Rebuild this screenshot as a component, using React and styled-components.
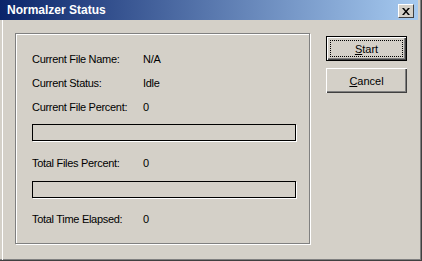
import React from "react";
import styled, { createGlobalStyle } from "styled-components";

const GlobalStyle = createGlobalStyle`
  html, body {
    margin: 0;
    padding: 0;
    background: #ffffff;
  }
`;

const Window = styled.div`
  width: 422px;
  height: 261px;
  box-sizing: border-box;
  background: #d4d0c8;
  border-right: 1px solid #404040;
  border-bottom: 1px solid #404040;
  box-shadow: inset -1px -1px 0 #808080;
  font-family: "Liberation Sans", Arial, sans-serif;
  display: flex;
  flex-direction: column;
  overflow: hidden;
`;

const TitleBar = styled.div`
  height: 20px;
  margin-right: 3px;
  display: flex;
  align-items: center;
  justify-content: space-between;
  padding: 0 4px 0 7px;
  background: linear-gradient(to right, #0a246a, #a6caf0);
`;

const Title = styled.span`
  color: #ffffff;
  font-weight: bold;
  font-size: 12px;
  letter-spacing: 0px;
`;

const CloseButton = styled.div`
  width: 16px;
  height: 14px;
  box-sizing: border-box;
  margin-top: 2px;
  background: #d4d0c8;
  border-top: 1px solid #ffffff;
  border-left: 1px solid #ffffff;
  border-right: 1px solid #404040;
  border-bottom: 1px solid #404040;
  display: flex;
  align-items: center;
  justify-content: center;
`;

const Body = styled.div`
  flex: 1;
  display: flex;
  align-items: flex-start;
  border-left: 1px solid #ffffff;
  margin-left: 2px;
  padding: 13px 0 0 12px;
`;

const GroupBox = styled.div`
  width: 295px;
  height: 211px;
  box-sizing: border-box;
  border: 1px solid #808080;
  box-shadow: inset 1px 1px 0 #ffffff, 1px 1px 0 #ffffff;
  padding: 13px 0 0 16px;
  display: flex;
  flex-direction: column;
`;

const Field = styled.div`
  display: flex;
  align-items: center;
  height: 24px;
  margin-top: ${(p) => p.$gap || 0}px;
  font-size: 11px;
  letter-spacing: -0.3px;
  color: #000000;
`;

const Label = styled.span`
  width: 111px;
`;

const Bar = styled.div`
  width: 264px;
  height: 17px;
  box-sizing: border-box;
  margin-top: ${(p) => p.$gap || 0}px;
  border: 1px solid #000000;
  box-shadow: 1px 1px 0 #ffffff;
  background: #d4d0c8;
`;

const Buttons = styled.div`
  display: flex;
  flex-direction: column;
  gap: 7px;
  margin: 3px 0 0 16px;
`;

const Button = styled.div`
  width: 81px;
  height: 25px;
  box-sizing: border-box;
  position: relative;
  display: flex;
  align-items: center;
  justify-content: center;
  font-size: 11px;
  color: #000000;
  background: #d4d0c8;
  border: ${(p) => (p.$default ? "1px solid #000000" : "none")};
  box-shadow: ${(p) =>
    p.$default
      ? "inset 1px 1px 0 #ffffff, inset -1px -1px 0 #404040, inset -2px -2px 0 #808080"
      : "inset 1px 1px 0 #ffffff, inset -1px -1px 0 #404040, inset -2px -2px 0 #808080"};
`;

const Focus = styled.span`
  position: absolute;
  inset: 3px;
  border: 1px dotted #000000;
`;

export default function App() {
  return (
    <>
      <GlobalStyle />
      <Window>
        <TitleBar>
          <Title>Normalzer Status</Title>
          <CloseButton>
            <svg width="8" height="7" viewBox="0 0 8 7">
              <path d="M0 0h2l2 2.5 2-2.5h2l-3 3.5 3 3.5h-2l-2-2.5-2 2.5h-2l3-3.5z" fill="#000" />
            </svg>
          </CloseButton>
        </TitleBar>
        <Body>
          <GroupBox>
            <Field>
              <Label>Current File Name:</Label>
              <span>N/A</span>
            </Field>
            <Field>
              <Label>Current Status:</Label>
              <span>Idle</span>
            </Field>
            <Field>
              <Label>Current File Percent:</Label>
              <span>0</span>
            </Field>
            <Bar $gap={5} />
            <Field $gap={10}>
              <Label>Total Files Percent:</Label>
              <span>0</span>
            </Field>
            <Bar $gap={6} />
            <Field $gap={9}>
              <Label>Total Time Elapsed:</Label>
              <span>0</span>
            </Field>
          </GroupBox>
          <Buttons>
            <Button $default>
              <Focus />
              <span>
                <u>S</u>tart
              </span>
            </Button>
            <Button>
              <span>
                <u>C</u>ancel
              </span>
            </Button>
          </Buttons>
        </Body>
      </Window>
    </>
  );
}
